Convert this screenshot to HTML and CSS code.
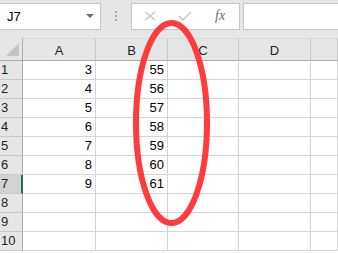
FILE: index.html
```html
<!DOCTYPE html>
<html lang="en">

<head>
    <meta charset="UTF-8">
    <meta name="viewport" content="width=device-width, initial-scale=1.0">
    <title>Sheet</title>
    <link rel="stylesheet" href="styles.css">
</head>

<body>
    <section class="formula-bar">
        <div class="name-box">
            <span>J7</span>
            <span class="arrow"></span>
        </div>
        <div class="grip"><i></i><i></i><i></i></div>
        <div class="buttons">
            <svg class="cancel" width="12" height="10" viewBox="0 0 12 10">
                <path d="M1 1 L11 9 M11 1 L1 9" stroke="#c4c4c4" stroke-width="1.3" fill="none" />
            </svg>
            <svg class="enter" width="14" height="10" viewBox="0 0 14 10">
                <path d="M1 5 L5 9 L13 1" stroke="#c4c4c4" stroke-width="1.4" fill="none" />
            </svg>
            <span class="fx">fx</span>
        </div>
        <div class="formula-input"></div>
    </section>

    <section class="sheet">
        <div class="corner"><span class="tri"></span></div>
        <div class="col-head">A</div>
        <div class="col-head">B</div>
        <div class="col-head">C</div>
        <div class="col-head">D</div>
        <div class="col-head"></div>

        <div class="row-head">1</div><div class="cell">3</div><div class="cell">55</div><div class="cell"></div><div class="cell"></div><div class="cell"></div>
        <div class="row-head">2</div><div class="cell">4</div><div class="cell">56</div><div class="cell"></div><div class="cell"></div><div class="cell"></div>
        <div class="row-head">3</div><div class="cell">5</div><div class="cell">57</div><div class="cell"></div><div class="cell"></div><div class="cell"></div>
        <div class="row-head">4</div><div class="cell">6</div><div class="cell">58</div><div class="cell"></div><div class="cell"></div><div class="cell"></div>
        <div class="row-head">5</div><div class="cell">7</div><div class="cell">59</div><div class="cell"></div><div class="cell"></div><div class="cell"></div>
        <div class="row-head">6</div><div class="cell">8</div><div class="cell">60</div><div class="cell"></div><div class="cell"></div><div class="cell"></div>
        <div class="row-head active">7</div><div class="cell">9</div><div class="cell">61</div><div class="cell"></div><div class="cell"></div><div class="cell"></div>
        <div class="row-head">8</div><div class="cell"></div><div class="cell"></div><div class="cell"></div><div class="cell"></div><div class="cell"></div>
        <div class="row-head">9</div><div class="cell"></div><div class="cell"></div><div class="cell"></div><div class="cell"></div><div class="cell"></div>
        <div class="row-head">10</div><div class="cell"></div><div class="cell"></div><div class="cell"></div><div class="cell"></div><div class="cell"></div>
    </section>

    <!-- hand-drawn highlight over column B -->
    <svg class="circle" width="338" height="253" viewBox="0 0 338 253">
        <ellipse cx="171.5" cy="123" rx="35.5" ry="100" fill="none" stroke="#ff3b3b" stroke-width="6" />
    </svg>
</body>

</html>
```

FILE: styles.css
```css
body {
    margin: 0;
    font-family: "Liberation Sans", Arial, sans-serif;
    font-size: 13px;
    color: #000;
    background: #fff;
    width: 338px;
    height: 253px;
    overflow: hidden;
    position: relative;
}

.formula-bar {
    display: flex;
    align-items: center;
    height: 38px;
    padding-bottom: 6px;
    box-sizing: border-box;
    background: #e6e6e6;
}

.name-box {
    display: flex;
    align-items: center;
    justify-content: space-between;
    width: 102px;
    height: 27px;
    margin-left: -1px;
    padding: 0 6px 0 7px;
    box-sizing: border-box;
    background: #fff;
    border: 1px solid #c6c6c6;
}

.arrow {
    width: 0;
    height: 0;
    border-left: 4px solid transparent;
    border-right: 4px solid transparent;
    border-top: 4px solid #6e6e6e;
}

.grip {
    display: flex;
    flex-direction: column;
    gap: 2px;
    width: 30px;
    align-items: center;
}

.grip i {
    width: 2px;
    height: 2px;
    background: #a8a8a8;
}

.buttons {
    display: flex;
    align-items: center;
    width: 109px;
    height: 27px;
    box-sizing: border-box;
    background: #fff;
    border: 1px solid #c6c6c6;
    padding-left: 12px;
}

.enter {
    margin-left: 22px;
}

.fx {
    margin-left: 23px;
    font-family: "Liberation Serif", serif;
    font-style: italic;
    font-size: 14px;
    color: #6a6a6a;
}

.formula-input {
    flex: 1;
    height: 27px;
    margin-left: 3px;
    box-sizing: border-box;
    background: #fff;
    border: 1px solid #c6c6c6;
    border-right: none;
}

.sheet {
    display: grid;
    grid-template-columns: 23px 73px 72px 71px 72px 1fr;
    grid-template-rows: 23px repeat(10, 19px);
}

.corner,
.col-head,
.row-head,
.cell {
    box-sizing: border-box;
}

.corner {
    position: relative;
    background: #e6e6e6;
    border-right: 1px solid #ababab;
    border-bottom: 1px solid #ababab;
}

.tri {
    position: absolute;
    right: 3px;
    bottom: 4px;
    width: 0;
    height: 0;
    border-left: 13px solid transparent;
    border-bottom: 13px solid #c4c4c4;
}

.col-head {
    display: flex;
    justify-content: center;
    align-items: center;
    padding-top: 2px;
    background: #e6e6e6;
    border-bottom: 1px solid #ababab;
    border-right: 1px solid #c8c8c8;
    border-top: 1px solid #dadada;
    color: #222;
}

.row-head {
    display: flex;
    align-items: flex-end;
    padding: 0 0 2px 1px;
    background: #e6e6e6;
    border-right: 1px solid #ababab;
    border-bottom: 1px solid #c8c8c8;
    color: #222;
}

.row-head.active {
    background: #d2d2d2;
    border-right: 2px solid #217346;
}

.cell {
    display: flex;
    align-items: flex-end;
    justify-content: flex-end;
    padding: 0 3px 2px 0;
    border-right: 1px solid #d4d4d4;
    border-bottom: 1px solid #d4d4d4;
}

.circle {
    position: absolute;
    left: 0;
    top: 0;
}
```
